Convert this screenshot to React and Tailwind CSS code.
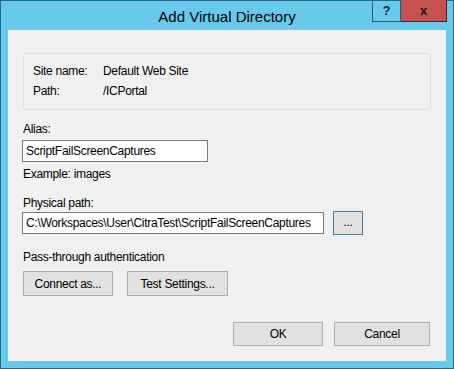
export default function App() {
  const font = { fontFamily: '"Liberation Sans", Arial, sans-serif' };
  return (
    <div
      className="w-[454px] h-[369px] bg-[#68c9ea] border border-[#2a6486] flex flex-col text-black"
      style={font}
    >
      {/* Title bar */}
      <div className="relative h-[29px] shrink-0 flex items-center justify-center">
        <span className="text-[15px] leading-none pt-[2px]">Add Virtual Directory</span>
        <div className="absolute right-[6px] top-[-1px] flex h-[22px]">
          <div className="w-[29px] border border-t-0 border-[#2a5a78] flex items-center justify-center text-[13px] font-bold text-[#1c2a3a]">
            ?
          </div>
          <div className="w-[46px] bg-[#c75050] border border-l-0 border-t-0 border-[#3d2a2a] flex items-center justify-center text-[13px] font-bold text-[#1a1a1a]">
            x
          </div>
        </div>
      </div>

      {/* Client area */}
      <div className="mx-[7px] mb-[7px] flex-1 bg-[#f0f0f0] pl-[14px] flex flex-col text-[12px] leading-[16px] tracking-[-0.3px]">
        {/* Group box */}
        <div className="mt-[23px] ml-px w-[408px] h-[57px] border border-[#dcdcdc] rounded-[3px] pt-[9px] pl-[9px]">
          <div className="flex h-[20px]">
            <span className="w-[70px]">Site name:</span>
            <span>Default Web Site</span>
          </div>
          <div className="flex">
            <span className="w-[70px]">Path:</span>
            <span>/ICPortal</span>
          </div>
        </div>

        <div className="mt-[11px] ml-px">Alias:</div>
        <div className="mt-[3px] w-[186px] h-[22px] border border-[#7a7a7a] bg-white pl-[3px] flex items-center">
          ScriptFailScreenCaptures
        </div>
        <div className="mt-[4px] ml-px">Example: images</div>

        <div className="mt-[13px] ml-px">Physical path:</div>
        <div className="flex items-center h-[24px] gap-[9px]">
          <div className="w-[302px] h-[22px] border border-[#7a7a7a] bg-white pl-[3px] flex items-center whitespace-nowrap overflow-hidden">
            C:\Workspaces\User\CitraTest\ScriptFailScreenCaptures
          </div>
          <button className="w-[30px] h-[24px] border border-[#3c7fb1] bg-[#e1e1e1] flex items-center justify-center pb-[2px]">
            ...
          </button>
        </div>

        <div className="mt-[14px] ml-px">Pass-through authentication</div>
        <div className="mt-[6px] ml-px flex gap-[14px]">
          <button className="w-[90px] h-[25px] border border-[#adadad] bg-[#e1e1e1]">
            Connect as...
          </button>
          <button className="w-[101px] h-[25px] border border-[#adadad] bg-[#e1e1e1]">
            Test Settings...
          </button>
        </div>

        <div className="mt-[26px] ml-[211px] flex gap-[11px]">
          <button className="w-[90px] h-[24px] border border-[#adadad] bg-[#e1e1e1]">OK</button>
          <button className="w-[96px] h-[24px] border border-[#adadad] bg-[#e1e1e1]">Cancel</button>
        </div>
      </div>
    </div>
  );
}
